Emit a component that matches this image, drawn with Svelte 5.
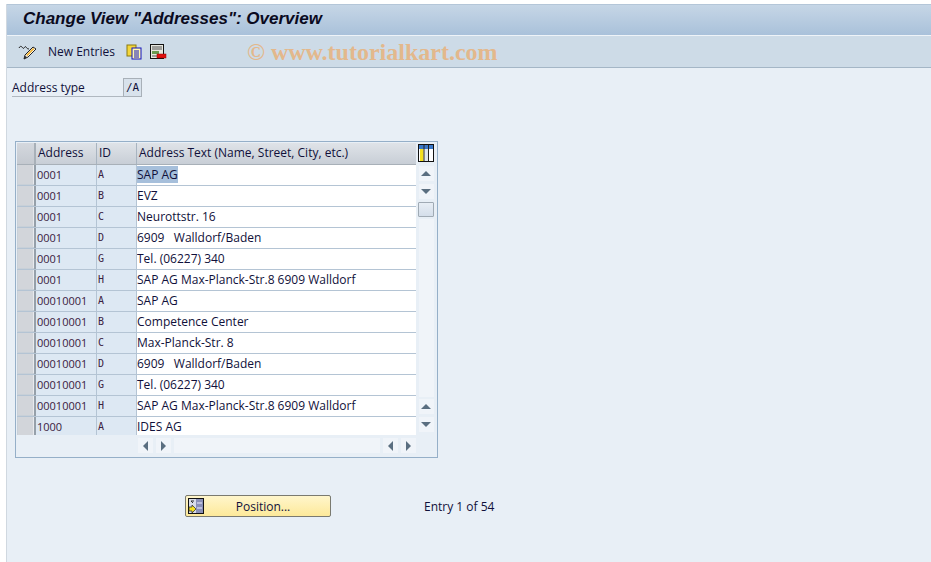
<script>
  const rows = [
    ["0001", "A", "SAP AG"],
    ["0001", "B", "EVZ"],
    ["0001", "C", "Neurottstr. 16"],
    ["0001", "D", "6909   Walldorf/Baden"],
    ["0001", "G", "Tel. (06227) 340"],
    ["0001", "H", "SAP AG Max-Planck-Str.8 6909 Walldorf"],
    ["00010001", "A", "SAP AG"],
    ["00010001", "B", "Competence Center"],
    ["00010001", "C", "Max-Planck-Str. 8"],
    ["00010001", "D", "6909   Walldorf/Baden"],
    ["00010001", "G", "Tel. (06227) 340"],
    ["00010001", "H", "SAP AG Max-Planck-Str.8 6909 Walldorf"],
    ["1000", "A", "IDES AG"],
  ];
</script>

<div class="page">
  <header class="title">Change View "Addresses": Overview</header>

  <div class="toolbar">
    <svg class="pencil" width="20" height="18" viewBox="0 0 20 18">
      <path d="M1 5c1-2 2-2 3-1s1 2 2 1 1-2 2-1 1 2 3 2" fill="none" stroke="#222" stroke-width="1" />
      <path d="M6 16l1-4 8-8 3 2-8 8z" fill="#fff" stroke="#222" />
      <path d="M8 12l7-7 1.500 1-7 7z" fill="#f0b030" />
      <path d="M6 16l1-3 2 1z" fill="#222" />
    </svg>
    <span class="new-entries">New Entries</span>
    <svg class="copy" width="16" height="16" viewBox="0 0 16 16">
      <rect x="1" y="1" width="9" height="11" fill="#f4d63a" stroke="#8a7a10" />
      <rect x="6" y="4" width="9" height="11" fill="#fff8b0" stroke="#1010c0" />
      <path d="M8 7h5M8 9h5M8 11h5M8 13h5" stroke="#1010c0" />
    </svg>
    <svg class="delete" width="17" height="16" viewBox="0 0 17 16">
      <rect x="0.500" y="0.500" width="13" height="14" fill="#e8e8e0" stroke="#111" />
      <path d="M2 3h10M2 5h10" stroke="#555" />
      <rect x="2" y="7" width="7" height="3" fill="#6a9a50" />
      <path d="M2 12h5" stroke="#555" />
      <rect x="7" y="10" width="9" height="4" fill="#e01010" stroke="#900" stroke-width="0.500" />
    </svg>
    <span class="watermark">© www.tutorialkart.com</span>
  </div>

  <div class="content">
    <div class="field">
      <span class="field-label">Address type</span>
      <span class="field-value">/A</span>
    </div>

    <div class="table-box">
      <div class="table-wrap">
        <div class="table-main">
          <div class="row head">
            <div class="sel"></div>
            <div class="cell">Address</div>
            <div class="cell">ID</div>
            <div class="cell last">Address Text (Name, Street, City, etc.)</div>
          </div>
          {#each rows as r, i}
            <div class="row" class:cut={i === rows.length - 1}>
              <div class="sel"><span></span></div>
              <div class="cell key">{r[0]}</div>
              <div class="cell key mono">{r[1]}</div>
              <div class="cell text"><span class:hl={i === 0}>{r[2]}</span></div>
            </div>
          {/each}
        </div>

        <div class="vscroll">
          <svg class="config" width="16" height="18" viewBox="0 0 16 18">
            <rect x="0.500" y="0.500" width="15" height="17" fill="#fff" stroke="#111" />
            <rect x="1" y="1" width="14" height="4" fill="#3a78c8" />
            <rect x="2" y="5" width="3.500" height="12" fill="#f5e020" />
            <rect x="6.500" y="5" width="3.500" height="12" fill="#dfe6ee" />
            <path d="M6 1v16M10.500 1v16" stroke="#222" />
          </svg>
          <div class="btn"><i class="up"></i></div>
          <div class="btn"><i class="down"></i></div>
          <div class="thumb"></div>
          <div class="track"></div>
          <div class="btn"><i class="up"></i></div>
          <div class="btn"><i class="down"></i></div>
        </div>
      </div>

      <div class="hscroll">
        <div class="btn"><i class="left"></i></div>
        <div class="btn"><i class="right"></i></div>
        <div class="htrack"></div>
        <div class="btn"><i class="left"></i></div>
        <div class="btn"><i class="right"></i></div>
      </div>
    </div>

    <div class="actions">
      <button class="position">
        <svg width="16" height="16" viewBox="0 0 16 16">
          <rect x="0.500" y="0.500" width="15" height="15" fill="#d8dce8" stroke="#111" />
          <rect x="8" y="1" width="7" height="14" fill="#8a90b8" />
          <path d="M9 5h5M9 10h5" stroke="#eef" />
          <path d="M3 3h3M3 3l2 2" stroke="#333" fill="none" />
          <path d="M1 9h3V7l4 4-4 4v-2H1z" fill="#f5e020" stroke="#222" stroke-width="0.700" />
        </svg>
        <span>Position...</span>
      </button>
      <span class="entry">Entry 1 of 54</span>
    </div>
  </div>
</div>

<style>
  :global(body) {
    margin: 0;
    background: #fff;
  }

  .page {
    width: 925px;
    height: 558px;
    margin: 4px 0 0 6px;
    background: #e8eff6;
    font-family: "Open Sans", sans-serif;
    font-size: 12px;
    color: #10103a;
    overflow: hidden;
    border-left: 1px solid #d0d8e0;
    box-sizing: border-box;
  }

  .title {
    height: 31px;
    box-sizing: border-box;
    padding: 4px 0 0 16px;
    background: linear-gradient(#c6d6e6, #a9c1da);
    border-top: 1px solid #b4c6d8;
    font-family: "Liberation Sans", sans-serif;
    font-size: 17px;
    font-weight: bold;
    font-style: italic;
    color: #0a0a1e;
    white-space: nowrap;
  }

  .toolbar {
    height: 33px;
    box-sizing: border-box;
    display: flex;
    align-items: center;
    padding: 0 0 0 11px;
    background: #cddbe7;
    border-top: 1px solid #eef3f8;
    border-bottom: 1px solid #a4b6c6;
    position: relative;
  }

  .new-entries {
    margin-left: 10px;
    white-space: nowrap;
  }

  .copy {
    margin-left: 11px;
  }

  .delete {
    margin-left: 8px;
  }

  .watermark {
    position: absolute;
    left: 240px;
    top: 3px;
    font-family: "Liberation Serif", serif;
    font-size: 24px;
    font-weight: bold;
    color: #e3b88c;
    white-space: nowrap;
  }

  .content {
    padding-top: 10px;
  }

  .field {
    display: flex;
    margin-left: 5px;
    height: 19px;
  }

  .field-label {
    width: 111px;
    box-sizing: border-box;
    border-bottom: 1px solid #b0b8c0;
    line-height: 19px;
  }

  .field-value {
    width: 19px;
    box-sizing: border-box;
    background: #d8e2ec;
    border: 1px solid #a8b0b8;
    font-family: "DejaVu Sans Mono", monospace;
    font-size: 11px;
    line-height: 17px;
    text-align: center;
  }

  .table-box {
    width: 423px;
    height: 317px;
    box-sizing: border-box;
    margin: 44px 0 0 8px;
    border: 1px solid #95afc8;
    background: #e8eff6;
    padding: 1px 1px 0 1px;
  }

  .table-wrap {
    display: flex;
    height: 292px;
  }

  .table-main {
    width: 400px;
    overflow: hidden;
  }

  .row {
    display: grid;
    grid-template-columns: 19px 61px 40px 280px;
    height: 21px;
    box-sizing: border-box;
    line-height: 20px;
    white-space: pre;
    border-bottom: 1px solid #b4c4d4;
  }

  .row.cut {
    border-bottom: 0;
  }

  .row.head {
    height: 22px;
    background: linear-gradient(#dfe3e8, #c8ced6);
    border-bottom: 1px solid #a8b0b8;
  }

  .head .sel {
    background: linear-gradient(#d4d8de, #c4c9d0);
    border-right: 2px solid #a8b0b8;
  }

  .head .cell {
    padding-left: 2px;
    border-right: 1px solid #a8b4c0;
  }

  .head .cell.last {
    border-right: 0;
  }

  .sel {
    box-sizing: border-box;
    background: #c8d0d8;
    border-right: 2px solid #96a0aa;
  }

  .sel span {
    display: block;
    height: 19px;
    margin: 0 0 0 1px;
    background: #d2d5da;
    border-right: 1px solid #e8eaee;
  }

  .cell {
    box-sizing: border-box;
    overflow: hidden;
  }

  .key {
    background: #dde8f3;
    border-right: 1px solid #b4c4d4;
    padding-left: 1px;
    color: #3a2040;
    font-size: 11px;
  }

  .mono {
    font-family: "DejaVu Sans Mono", monospace;
    font-size: 10px;
  }

  .text {
    background: #fff;
  }

  .hl {
    background: #a6bfdb;
  }

  .vscroll {
    width: 20px;
    display: flex;
    flex-direction: column;
    align-items: center;
  }

  .config {
    margin: 1px 0 4px;
  }

  .btn {
    width: 15px;
    height: 15px;
    margin-bottom: 3px;
    background: #f0f4f9;
    display: flex;
    align-items: center;
    justify-content: center;
  }

  .btn i {
    display: block;
    width: 0;
    height: 0;
    border: 4px solid transparent;
  }

  .btn .up {
    border-top: 0;
    border-bottom: 5px solid #5a6e80;
    border-left-width: 5px;
    border-right-width: 5px;
  }

  .btn .down {
    border-bottom: 0;
    border-top: 5px solid #5a6e80;
    border-left-width: 5px;
    border-right-width: 5px;
  }

  .btn .left {
    border-left: 0;
    border-right: 5px solid #5a6e80;
    border-top-width: 5px;
    border-bottom-width: 5px;
  }

  .btn .right {
    border-right: 0;
    border-left: 5px solid #5a6e80;
    border-top-width: 5px;
    border-bottom-width: 5px;
  }

  .thumb {
    width: 14px;
    height: 13px;
    background: linear-gradient(#e8eef5, #d4deea);
    border: 1px solid #a0aab4;
    border-radius: 1px;
  }

  .track {
    flex: 1;
    width: 15px;
    margin: 2px 0;
    background: #f0f4f9;
  }

  .hscroll {
    display: flex;
    gap: 3px;
    margin: 3px 0 0 121px;
  }

  .hscroll .btn {
    margin: 0;
  }

  .htrack {
    width: 206px;
    height: 15px;
    background: #f0f4f9;
  }

  .actions {
    display: flex;
    align-items: center;
    margin: 37px 0 0 178px;
  }

  .position {
    width: 146px;
    height: 22px;
    box-sizing: border-box;
    padding: 0 0 0 2px;
    display: flex;
    align-items: center;
    background: linear-gradient(#fff6cc, #fde99a);
    border: 1px solid #7a7a70;
    border-radius: 2px;
    font: inherit;
    color: inherit;
  }

  .position span {
    flex: 1;
    text-align: center;
    padding-right: 8px;
  }

  .entry {
    margin-left: 93px;
  }
</style>
